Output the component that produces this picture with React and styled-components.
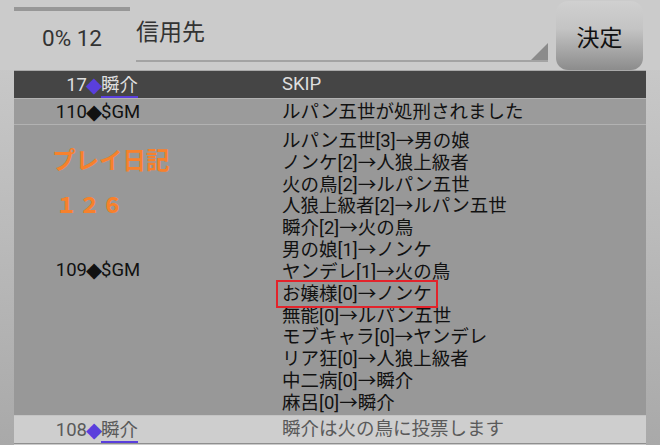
import React from "react";
import styled, { createGlobalStyle } from "styled-components";

const GlobalStyle = createGlobalStyle`
  html, body {
    margin: 0;
    padding: 0;
  }
  body {
    width: 660px;
    height: 445px;
    overflow: hidden;
    font-family: Roboto, "Noto Sans CJK JP", sans-serif;
    background: linear-gradient(#cdcdcd 0%, #c6c6c6 20%, #a9a9a9 100%);
  }
`;

const Page = styled.div`
  display: flex;
  flex-direction: column;
  width: 660px;
  height: 445px;
`;

const TopBar = styled.div`
  display: flex;
  height: 72px;
  padding-left: 14px;
  box-sizing: border-box;
  background: #cbcbcb;
`;

const Counter = styled.div`
  width: 116px;
  display: flex;
  flex-direction: column;
  align-items: center;
`;

const Progress = styled.div`
  align-self: stretch;
  height: 4px;
  margin-top: 7px;
  background: #979797;
`;

const CounterText = styled.div`
  margin-top: 13px;
  font-size: 22.5px;
  color: #333;
  line-height: 28px;
`;

const Select = styled.div`
  position: relative;
  width: 412px;
  height: 62px;
  margin-left: 6px;
  box-sizing: border-box;
  border-bottom: 2px solid #a3a3a3;
  font-size: 23px;
  color: #333;
  padding-top: 17px;
  line-height: 32px;
  &::after {
    content: "";
    position: absolute;
    right: 0;
    bottom: 0;
    border-style: solid;
    border-width: 0 0 17px 17px;
    border-color: transparent transparent #8b8b8b transparent;
  }
`;

const Button = styled.div`
  width: 87px;
  height: 69px;
  margin: 1px 0 0 8px;
  border-radius: 12px;
  background: linear-gradient(#d0d0d0 0%, #c4c4c4 40%, #8c8c8c 100%);
  display: flex;
  align-items: center;
  justify-content: center;
  font-size: 23px;
  color: #111;
`;

const Table = styled.div`
  position: relative;
  margin: 0 14px;
  display: flex;
  flex-direction: column;
  font-size: 18.5px;
`;

const Row = styled.div`
  display: grid;
  grid-template-columns: 268px 1fr;
  min-height: ${(p) => p.$h || 26}px;
  box-sizing: border-box;
  padding-top: ${(p) => (p.$h ? 0 : 2)}px;
  border-top: 1px solid ${(p) => p.$line || "#b2b2b2"};
  background: ${(p) => p.$bg};
  color: ${(p) => p.$fg};
  line-height: 23px;
`;

const Who = styled.div`
  display: flex;
  align-items: center;
`;

const Num = styled.span`
  width: 73px;
  text-align: right;
`;

const Diamond = styled.span`
  font-family: "DejaVu Sans", sans-serif;
  font-size: 21px;
  width: 14px;
  display: flex;
  justify-content: center;
  color: ${(p) => p.$c || "inherit"};
`;

const Name = styled.span`
  border-bottom: ${(p) => (p.$link ? "2px solid #5a3fdc" : "none")};
  line-height: 21px;
  margin-top: ${(p) => (p.$link ? "2px" : "0")};
`;

const Lines = styled.div`
  padding: 4px 0 0;
  line-height: 21.83px;
`;

const Line = styled.div`
  white-space: nowrap;
`;

const Marked = styled.span`
  position: relative;
  &::after {
    content: "";
    position: absolute;
    inset: -3px -6px -3px -6px;
    border: 2px solid #e3232b;
  }
`;

const Diary = styled.div`
  position: absolute;
  left: 38px;
  top: 73px;
  display: flex;
  flex-direction: column;
  color: #f7812c;
  font-weight: bold;
  font-family: "Noto Sans CJK JP", sans-serif;
`;

const DiaryTitle = styled.div`
  font-size: 23.5px;
  line-height: 32px;
`;

const DiaryCount = styled.div`
  margin-top: 15px;
  margin-left: 4px;
  font-size: 21px;
  font-weight: 900;
  letter-spacing: 2px;
  line-height: 28px;
`;

const votes = [
  "ルパン五世[3]→男の娘",
  "ノンケ[2]→人狼上級者",
  "火の鳥[2]→ルパン五世",
  "人狼上級者[2]→ルパン五世",
  "瞬介[2]→火の鳥",
  "男の娘[1]→ノンケ",
  "ヤンデレ[1]→火の鳥",
  "お嬢様[0]→ノンケ",
  "無能[0]→ルパン五世",
  "モブキャラ[0]→ヤンデレ",
  "リア狂[0]→人狼上級者",
  "中二病[0]→瞬介",
  "麻呂[0]→瞬介",
];

export default function App() {
  return (
    <Page>
      <GlobalStyle />
      <TopBar>
        <Counter>
          <Progress />
          <CounterText>0% 12</CounterText>
        </Counter>
        <Select>信用先</Select>
        <Button>決定</Button>
      </TopBar>
      <Table>
        <Row $bg="#454545" $fg="#dedede" $line="#a9a9a9">
          <Who>
            <Num>17</Num>
            <Diamond $c="#5a3fdc">◆</Diamond>
            <Name $link>瞬介</Name>
          </Who>
          <div>SKIP</div>
        </Row>
        <Row $bg="#9b9b9b" $fg="#111">
          <Who>
            <Num>110</Num>
            <Diamond>◆</Diamond>
            <Name>$GM</Name>
          </Who>
          <div>ルパン五世が処刑されました</div>
        </Row>
        <Row $bg="#989898" $fg="#111">
          <Who>
            <Num>109</Num>
            <Diamond>◆</Diamond>
            <Name>$GM</Name>
          </Who>
          <Lines>
            {votes.map((v) => (
              <Line key={v}>{v.startsWith("お嬢様") ? <Marked>{v}</Marked> : v}</Line>
            ))}
          </Lines>
        </Row>
        <Row $bg="#cecece" $fg="#5a5a5a" $line="#c4c4c4">
          <Who>
            <Num>108</Num>
            <Diamond $c="#5a3fdc">◆</Diamond>
            <Name $link>瞬介</Name>
          </Who>
          <div>瞬介は火の鳥に投票します</div>
        </Row>
        <Row $bg="#cbcbcb" $fg="#5a5a5a" $line="#8f8f8f" $h={10} />
        <Diary>
          <DiaryTitle>プレイ日記</DiaryTitle>
          <DiaryCount>１２６</DiaryCount>
        </Diary>
      </Table>
    </Page>
  );
}
